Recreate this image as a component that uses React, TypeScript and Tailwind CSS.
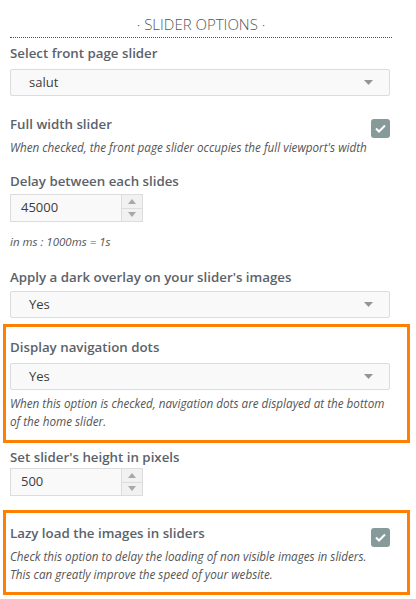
import React from "react";

const Arrow = () => (
  <svg width="9" height="5" viewBox="0 0 9 5" className="block">
    <path d="M0 0 L9 0 L4.5 5 Z" fill="#959595" />
  </svg>
);

const Select = ({ value, mt }: { value: string; mt: string }) => (
  <div
    className={`${mt} w-[380px] h-[27px] flex items-center justify-between bg-[#f9f9f9] border border-[#dcdcdc] rounded-[2px] pl-[18px] pr-[16px] text-[13px] text-[#3c3c3c]`}
  >
    <span>{value}</span>
    <Arrow />
  </div>
);

const NumberInput = ({ value, mt }: { value: string; mt: string }) => (
  <div className={`${mt} w-[133px] h-[28px] flex border border-[#dcdcdc] bg-[#f9f9f9]`}>
    <div className="flex-1 flex items-center pl-[10px] text-[13px] text-[#3c3c3c]">{value}</div>
    <div className="w-[21px] flex flex-col border-l border-[#dcdcdc] bg-[#f1f1f1]">
      <div className="flex-1 flex items-center justify-center border-b border-[#dcdcdc]">
        <svg width="8" height="5" viewBox="0 0 8 5">
          <path d="M0 5 L8 5 L4 0 Z" fill="#a8a8a8" />
        </svg>
      </div>
      <div className="flex-1 flex items-center justify-center">
        <svg width="8" height="5" viewBox="0 0 8 5">
          <path d="M0 0 L8 0 L4 5 Z" fill="#a8a8a8" />
        </svg>
      </div>
    </div>
  </div>
);

const Check = () => (
  <div className="mt-[5px] w-[19px] h-[19px] rounded-[3px] bg-[#879a9a] flex items-center justify-center shrink-0">
    <svg width="11" height="9" viewBox="0 0 11 9">
      <path d="M1 4.5 L4 7.5 L10 1.5" fill="none" stroke="#fff" strokeWidth="2" />
    </svg>
  </div>
);

const Label = ({ children, mt }: { children: React.ReactNode; mt: string }) => (
  <div className={`${mt} text-[13.3px] leading-[20px] font-semibold text-[#5b626a]`}>{children}</div>
);

const Desc = ({ children, mt = "" }: { children: React.ReactNode; mt?: string }) => (
  <div className={`${mt} text-[11.7px] leading-[18px] italic text-[#555]`}>{children}</div>
);

export default function App() {
  return (
    <div
      className="w-[416px] h-[599px] bg-white overflow-hidden"
      style={{ fontFamily: '"Open Sans", sans-serif' }}
    >
      <div className="ml-[10px] w-[382px] pt-[14px] pb-[3px] border-b border-dotted border-[#555] text-center text-[15px] leading-[20px] font-light text-[#555]">
        · SLIDER OPTIONS ·
      </div>

      <div className="pl-[10px]">
        <Label mt="mt-[5px]">Select front page slider</Label>
        <Select value="salut" mt="mt-[6px]" />

        <div className="mt-[18px] w-[380px] flex justify-between items-start">
          <div className="text-[13.3px] leading-[20px] font-semibold text-[#5b626a]">Full width slider</div>
          <Check />
        </div>
        <Desc>When checked, the front page slider occupies the full viewport's width</Desc>

        <Label mt="mt-[15px]">Delay between each slides</Label>
        <NumberInput value="45000" mt="mt-[3px]" />
        <div className="mt-[12px] text-[11.5px] leading-[16px] italic text-[#555]">in ms : 1000ms = 1s</div>

        <Label mt="mt-[17px]">Apply a dark overlay on your slider's images</Label>
        <Select value="Yes" mt="mt-[4px]" />
      </div>

      <div className="mt-[6px] ml-[3px] w-[407px] border-[3px] border-[#ff7f00] pl-[4px] pt-[10px] pb-[10px]">
        <Label mt="">Display navigation dots</Label>
        <Select value="Yes" mt="mt-[6px]" />
        <Desc mt="mt-[4px]">
          When this option is checked, navigation dots are displayed at the bottom
          <br />
          of the home slider.
        </Desc>
      </div>

      <div className="pl-[10px]">
        <Label mt="mt-[4px]">Set slider's height in pixels</Label>
        <NumberInput value="500" mt="mt-[1px]" />
      </div>

      <div className="mt-[14px] ml-[3px] w-[407px] border-[3px] border-[#ff7f00] pl-[4px] pt-[10px] pb-[9px]">
        <div className="w-[380px] flex justify-between items-start">
          <div className="text-[13.3px] leading-[20px] font-semibold text-[#5b626a]">Lazy load the images in sliders</div>
          <Check />
        </div>
        <Desc>
          Check this option to delay the loading of non visible images in sliders.
          <br />
          This can greatly improve the speed of your website.
        </Desc>
      </div>
    </div>
  );
}
